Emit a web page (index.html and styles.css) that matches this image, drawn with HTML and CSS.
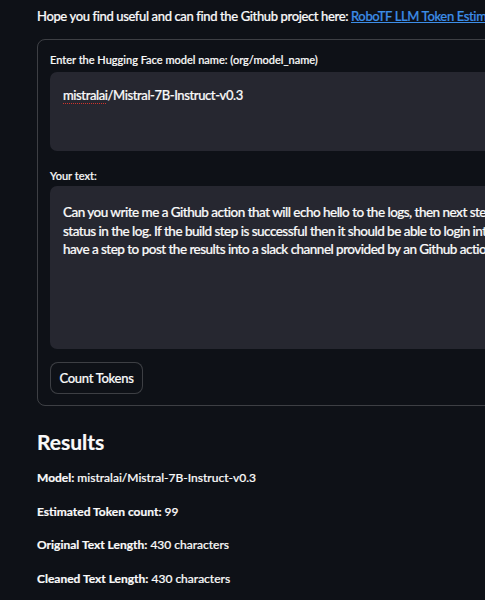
FILE: index.html
```html
<!DOCTYPE html>
<html>
<head>
<meta charset="utf-8">
<link rel="stylesheet" href="styles.css">
</head>
<body>
<main class="page">
  <p class="intro">Hope you find useful and can find the Github project here: <a href="#" class="link">RoboTF LLM Token Estimator</a></p>
  <section class="form">
    <label class="label">Enter the Hugging Face model name: (org/model_name)</label>
    <div class="input"><span class="typo">mistralai</span>/Mistral-7B-Instruct-v0.3</div>
    <label class="label label-text">Your text:</label>
    <div class="textarea">Can you write me a Github action that will echo hello to the logs, then next step will build a docker image and print the<br>status in the log. If the build step is successful then it should be able to login into docker hub and push the image, then<br>have a step to post the results into a slack channel provided by an Github action secret.</div>
    <button class="btn">Count Tokens</button>
  </section>
  <h3 class="results-title">Results</h3>
  <p class="result"><b>Model:</b> mistralai/Mistral-7B-Instruct-v0.3</p>
  <p class="result"><b>Estimated Token count:</b> 99</p>
  <p class="result"><b>Original Text Length:</b> 430 characters</p>
  <p class="result"><b>Cleaned Text Length:</b> 430 characters</p>
</main>
</body>
</html>
```
FILE: styles.css
```css
html, body {
  margin: 0;
  padding: 0;
  background: #0e1117;
  overflow: hidden;
  height: 600px;
}
body {
  font-family: "Lato", "Open Sans", sans-serif;
  font-weight: 500;
  color: #fafafa;
  -webkit-text-stroke: 0.2px currentColor;
}
.page {
  width: 760px;
  padding: 6px 0 0 37px;
}
.intro {
  margin: 0;
  font-size: 13px;
  letter-spacing: -0.37px;
  line-height: 20px;
}
.link {
  color: #3d8ee8;
  text-decoration: underline;
}
.form {
  margin-top: 13px;
  border: 1px solid rgba(250, 250, 250, 0.2);
  border-radius: 8px;
  padding: 12px 12px 11px 12px;
  display: flex;
  flex-direction: column;
  align-items: flex-start;
}
.label {
  font-size: 11px;
  line-height: 16px;
  margin-bottom: 4px;
}
.label-text {
  margin-top: 17px;
  margin-bottom: 2px;
}
.input {
  box-sizing: border-box;
  width: 100%;
  height: 79px;
  background: #262730;
  border-radius: 7px;
  padding: 14px 13px;
  font-size: 13px;
  letter-spacing: -0.4px;
  line-height: 18px;
}
.typo {
  text-decoration: underline dotted #d0342c;
  text-decoration-thickness: 1px;
  text-underline-offset: 3px;
}
.textarea {
  box-sizing: border-box;
  width: 100%;
  height: 163px;
  background: #262730;
  border-radius: 7px;
  padding: 17px 13px 15px;
  font-size: 13.5px;
  letter-spacing: -0.52px;
  line-height: 18.5px;
  white-space: nowrap;
  overflow: hidden;
}
.btn {
  margin-top: 13px;
  height: 32px;
  width: 93px;
  background: #0e1117;
  color: #fafafa;
  border: 1px solid rgba(250, 250, 250, 0.2);
  border-radius: 8px;
  font-family: inherit;
  font-weight: 500;
  font-size: 13px;
  letter-spacing: -0.3px;
  padding: 0;
}
.results-title {
  margin: 22px 0 13px;
  font-size: 21px;
  line-height: 28px;
  font-weight: 700;
}
.result {
  margin: 0 0 16px;
  font-size: 12px;
  line-height: 17.5px;
}
.result b {
  font-weight: 700;
}
```
